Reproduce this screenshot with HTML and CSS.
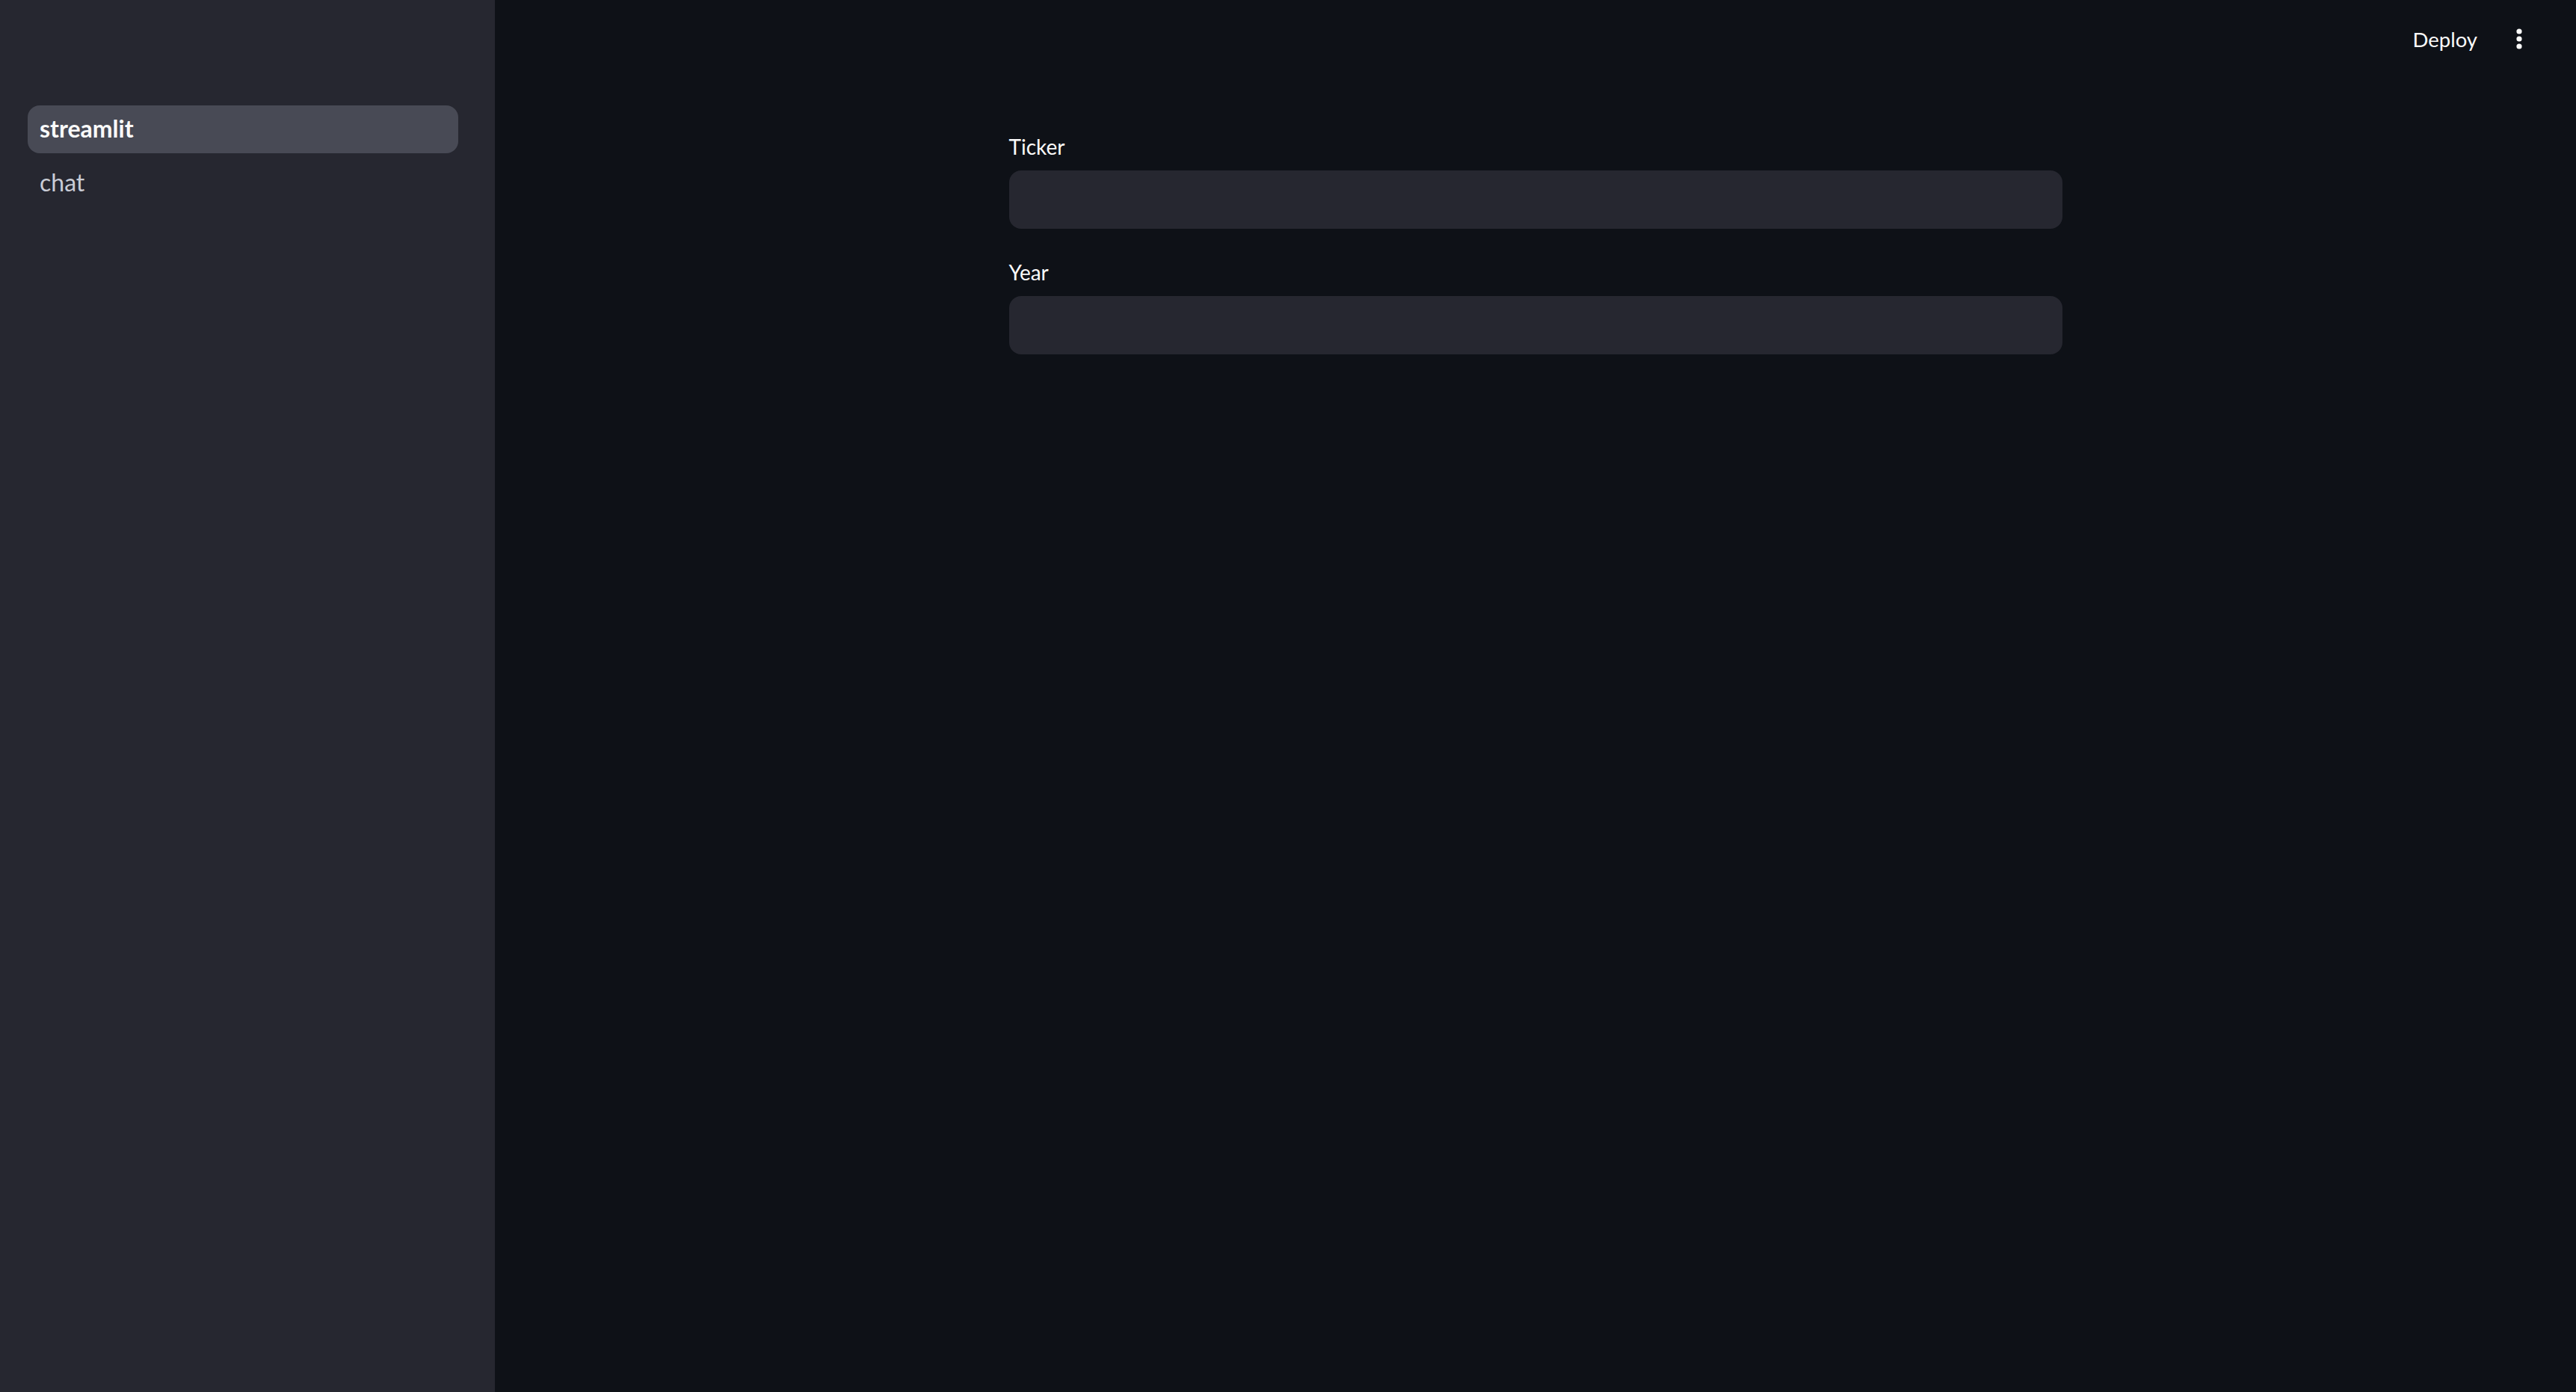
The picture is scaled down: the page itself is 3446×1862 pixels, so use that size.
FILE: index.html
```html
<!DOCTYPE html>
<html lang="en">
<head>
<meta charset="utf-8">
<title>streamlit</title>
<link rel="stylesheet" href="styles.css">
</head>
<body>
<div class="app">
  <aside class="sidebar">
    <nav class="nav">
      <a class="nav-item active">streamlit</a>
      <a class="nav-item">chat</a>
    </nav>
  </aside>
  <main class="main">
    <header class="header">
      <button class="deploy">Deploy</button>
      <button class="menu" aria-label="Main menu">
        <svg width="40" height="40" viewBox="0 0 40 40"><circle cx="20" cy="10" r="3.6" fill="#fafafa"/><circle cx="20" cy="20" r="3.6" fill="#fafafa"/><circle cx="20" cy="30" r="3.6" fill="#fafafa"/></svg>
      </button>
    </header>
    <section class="content">
      <div class="field">
        <label class="label">Ticker</label>
        <div class="input"></div>
      </div>
      <div class="field">
        <label class="label">Year</label>
        <div class="input"></div>
      </div>
    </section>
  </main>
</div>
</body>
</html>
```
FILE: styles.css
```css
html, body {
  margin: 0;
  height: 100%;
}
body {
  font-family: Lato, "Noto Sans", "Liberation Sans", sans-serif;
  background: #0e1117;
  color: #fafafa;
}
.app {
  display: flex;
  height: 100vh;
}
.sidebar {
  width: 662px;
  flex: 0 0 662px;
  background: #262730;
  box-sizing: border-box;
  padding: 141px 49px 0 37px;
}
.nav {
  display: flex;
  flex-direction: column;
  gap: 8px;
}
.nav-item {
  display: flex;
  align-items: center;
  box-sizing: border-box;
  height: 64px;
  padding: 0 0 4px 16px;
  border-radius: 16px;
  font-size: 32px;
  color: #c9ccd6;
}
.nav-item.active {
  background: #484a55;
  color: #fafafa;
  font-weight: 700;
}
.main {
  flex: 1;
  display: flex;
  flex-direction: column;
  background: #0e1117;
}
.header {
  height: 104px;
  display: flex;
  align-items: center;
  justify-content: flex-end;
  gap: 20px;
  padding-right: 56px;
}
.deploy {
  background: none;
  border: none;
  color: #fafafa;
  font-family: inherit;
  font-size: 27.5px;
  padding: 0 16px;
  height: 64px;
}
.menu {
  background: none;
  border: none;
  padding: 0;
  width: 40px;
  height: 40px;
  display: flex;
}
.content {
  width: 1409px;
  margin: 0 auto;
  padding-top: 68px;
  display: flex;
  flex-direction: column;
  gap: 34px;
}
.field {
  display: flex;
  flex-direction: column;
}
.label {
  display: flex;
  align-items: center;
  height: 48px;
  margin-bottom: 8px;
  font-size: 28px;
  color: #fafafa;
}
.input {
  height: 78px;
  background: #262730;
  border-radius: 16px;
}
```
